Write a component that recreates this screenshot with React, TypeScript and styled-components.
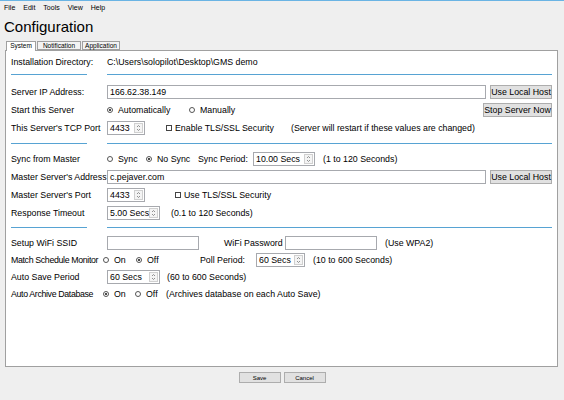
import React from 'react';
import styled, {createGlobalStyle} from 'styled-components';

const GlobalStyle = createGlobalStyle`
  html, body { margin: 0; padding: 0; }
  body {
    background: #efefef;
    font-family: "Liberation Sans", Arial, sans-serif;
    color: #000;
  }
`;

const Window = styled.div`
  width: 564px;
  height: 400px;
  box-sizing: border-box;
  border-top: 1px solid #6ab4e4;
  background: #efefef;
  display: flex;
  flex-direction: column;
  overflow: hidden;
`;

const MenuBar = styled.div`
  display: flex;
  gap: 8px;
  height: 12px;
  padding-left: 4px;
  align-items: center;
  font-size: 7px;
`;

const Title = styled.h1`
  margin: 0;
  padding: 5px 0 5px 4px;
  font-size: 15px;
  font-weight: normal;
  line-height: 18px;
`;

const TabStrip = styled.div`
  display: flex;
  align-items: flex-end;
  gap: 1px;
  padding-left: 6px;
  height: 9px;
  position: relative;
  z-index: 1;
`;

const Tab = styled.div<{$active?: boolean; $w: number}>`
  box-sizing: border-box;
  width: ${p => p.$w}px;
  height: ${p => (p.$active ? 10 : 9)}px;
  margin-bottom: ${p => (p.$active ? -1 : 0)}px;
  border: 1px solid #a0a0a0;
  border-bottom: ${p => (p.$active ? 'none' : '1px solid #a0a0a0')};
  background: ${p => (p.$active ? '#fff' : '#f3f3f3')};
  font-size: 6.5px;
  line-height: 8px;
  text-align: center;
`;

const Panel = styled.div`
  margin: 0 6px 0 5px;
  height: 317px;
  box-sizing: border-box;
  background: #fff;
  border: 1px solid #a0a0a0;
  padding: 2px 5px 0 5px;
  font-size: 8.8px;
`;

const Row = styled.div<{$h?: number}>`
  display: grid;
  grid-template-columns: 96px 1fr;
  align-items: center;
  height: ${p => p.$h ?? 18}px;
`;

const Label = styled.span<{$tight?: boolean}>`
  white-space: nowrap;
  letter-spacing: ${p => (p.$tight ? '-0.35px' : 'normal')};
`;

const Cell = styled.div`
  display: flex;
  align-items: center;
  min-width: 0;
  white-space: nowrap;
`;

const Separator = styled.div<{$mt: number; $mb: number}>`
  display: grid;
  grid-template-columns: 96px 1fr;
  margin: ${p => p.$mt}px 0 ${p => p.$mb}px;
  height: 1px;
  div {
    height: 1px;
    background: #57a3d3;
  }
  div:first-child {
    width: 76px;
  }
`;

const Text = styled.span<{$ml?: number; $w?: number}>`
  margin-left: ${p => p.$ml ?? 0}px;
  ${p => (p.$w ? `width: ${p.$w}px; flex: none;` : '')}
`;

const TextInput = styled.div<{$w?: number; $ml?: number}>`
  box-sizing: border-box;
  height: 14px;
  ${p => (p.$w ? `width: ${p.$w}px; flex: none;` : 'flex: 1;')}
  margin-left: ${p => p.$ml ?? 0}px;
  border: 1px solid #a7a9ae;
  background: #fff;
  padding-left: 2px;
  line-height: 12px;
`;

const Button = styled.button<{$w: number; $ml?: number}>`
  box-sizing: border-box;
  width: ${p => p.$w}px;
  height: 14px;
  margin-left: ${p => (p.$ml === undefined ? 'auto' : `${p.$ml}px`)};
  padding: 0;
  flex: none;
  font-family: inherit;
  font-size: 8.8px;
  color: #000;
  background: #e1e1e1;
  border: 1px solid #adadad;
`;

const SpinBox = styled.div<{$w: number; $ml?: number}>`
  box-sizing: border-box;
  width: ${p => p.$w}px;
  height: 14px;
  flex: none;
  margin-left: ${p => p.$ml ?? 0}px;
  border: 1px solid #a7a9ae;
  background: #fff;
  display: flex;
  align-items: center;
  padding: 0 1px 0 2px;
`;

const SpinButtons = styled.div`
  margin-left: auto;
  box-sizing: border-box;
  width: 9px;
  height: 10px;
  border: 1px solid #d0d0d0;
  background: #f4f4f4;
  display: flex;
  align-items: center;
  justify-content: center;
`;

const Option = styled.label<{$w?: number; $ml?: number}>`
  display: inline-flex;
  align-items: center;
  gap: 5px;
  flex: none;
  margin-left: ${p => p.$ml ?? 0}px;
  ${p => (p.$w ? `width: ${p.$w}px;` : '')}
`;

const RadioMark = styled.span<{$on?: boolean}>`
  box-sizing: border-box;
  width: 6px;
  height: 6px;
  border-radius: 50%;
  border: 1px solid #555;
  display: flex;
  align-items: center;
  justify-content: center;
  &::after {
    content: '';
    width: 2px;
    height: 2px;
    border-radius: 50%;
    background: ${p => (p.$on ? '#111' : 'transparent')};
  }
`;

const CheckMark = styled.span`
  box-sizing: border-box;
  width: 6px;
  height: 6px;
  border: 1px solid #444;
  margin-right: -2px;
`;

const Footer = styled.div`
  flex: 1;
  display: flex;
  justify-content: center;
  gap: 3px;
  padding-top: 5px;
`;

const FooterButton = styled.button`
  box-sizing: border-box;
  width: 42px;
  height: 11px;
  padding: 0;
  font-family: inherit;
  font-size: 6px;
  color: #000;
  background: #e1e1e1;
  border: 1px solid #adadad;
`;

const Spinner = ({value, w, ml}: {value: string; w: number; ml?: number}) => (
  <SpinBox $w={w} $ml={ml}>
    <span>{value}</span>
    <SpinButtons>
      <svg width="5" height="8" viewBox="0 0 5 8">
        <polyline points="1,3 2.5,1.5 4,3" fill="none" stroke="#777" strokeWidth="0.8" />
        <polyline points="1,5 2.5,6.5 4,5" fill="none" stroke="#777" strokeWidth="0.8" />
      </svg>
    </SpinButtons>
  </SpinBox>
);

const Radio = ({on, text, w, ml}: {on?: boolean; text: string; w?: number; ml?: number}) => (
  <Option $w={w} $ml={ml}>
    <RadioMark $on={on} />
    {text}
  </Option>
);

const Check = ({text, ml, w}: {text: string; ml?: number; w?: number}) => (
  <Option $ml={ml} $w={w}>
    <CheckMark />
    {text}
  </Option>
);

const App = () => {
  return (
    <>
      <GlobalStyle />
      <Window>
        <MenuBar>
          <span>File</span>
          <span>Edit</span>
          <span>Tools</span>
          <span>View</span>
          <span>Help</span>
        </MenuBar>
        <Title>Configuration</Title>
        <TabStrip>
          <Tab $active $w={30}>System</Tab>
          <Tab $w={44}>Notification</Tab>
          <Tab $w={38}>Application</Tab>
        </TabStrip>
        <Panel>
          <Row>
            <Label>Installation Directory:</Label>
            <Cell>C:\Users\solopilot\Desktop\GMS demo</Cell>
          </Row>
          <Separator $mt={3} $mb={8}>
            <div />
            <div />
          </Separator>

          <Row>
            <Label>Server IP Address:</Label>
            <Cell>
              <TextInput>166.62.38.149</TextInput>
              <Button $w={62} $ml={4}>Use Local Host</Button>
            </Cell>
          </Row>
          <Row>
            <Label>Start this Server</Label>
            <Cell>
              <Radio on text="Automatically" w={82} />
              <Radio text="Manually" />
              <Button $w={69}>Stop Server Now</Button>
            </Cell>
          </Row>
          <Row>
            <Label>This Server's TCP Port</Label>
            <Cell>
              <Spinner value="4433" w={38} />
              <Check text="Enable TLS/SSL Security" ml={21} w={125} />
              <Text>(Server will restart if these values are changed)</Text>
            </Cell>
          </Row>
          <Separator $mt={6} $mb={6}>
            <div />
            <div />
          </Separator>

          <Row>
            <Label>Sync from Master</Label>
            <Cell>
              <Radio text="Sync" w={39} />
              <Radio on text="No Sync" w={52} />
              <Text $w={55}>Sync Period:</Text>
              <Spinner value="10.00 Secs" w={62} />
              <Text $ml={8}>(1 to 120 Seconds)</Text>
            </Cell>
          </Row>
          <Row>
            <Label>Master Server's Address</Label>
            <Cell>
              <TextInput>c.pejaver.com</TextInput>
              <Button $w={62} $ml={4}>Use Local Host</Button>
            </Cell>
          </Row>
          <Row>
            <Label>Master Server's Port</Label>
            <Cell>
              <Spinner value="4433" w={38} />
              <Check text="Use TLS/SSL Security" ml={30} />
            </Cell>
          </Row>
          <Row>
            <Label>Response Timeout</Label>
            <Cell>
              <Spinner value="5.00 Secs" w={53} />
              <Text $ml={11}>(0.1 to 120 Seconds)</Text>
            </Cell>
          </Row>
          <Separator $mt={5} $mb={6}>
            <div />
            <div />
          </Separator>

          <Row $h={17}>
            <Label>Setup WiFi SSID</Label>
            <Cell>
              <TextInput $w={92} />
              <Text $ml={25} $w={61}>WiFi Password</Text>
              <TextInput $w={92} />
              <Text $ml={8}>(Use WPA2)</Text>
            </Cell>
          </Row>
          <Row $h={17}>
            <Label $tight>Match Schedule Monitor</Label>
            <Cell>
              <Radio text="On" w={33} ml={-4} />
              <Radio on text="Off" w={64} />
              <Text $w={56}>Poll Period:</Text>
              <Spinner value="60 Secs" w={49} />
              <Text $ml={8}>(10 to 600 Seconds)</Text>
            </Cell>
          </Row>
          <Row $h={17}>
            <Label>Auto Save Period</Label>
            <Cell>
              <Spinner value="60 Secs" w={53} />
              <Text $ml={7}>(60 to 600 Seconds)</Text>
            </Cell>
          </Row>
          <Row $h={17}>
            <Label $tight>Auto Archive Database</Label>
            <Cell>
              <Radio on text="On" w={32} ml={-4} />
              <Radio text="Off" w={31} />
              <Text>(Archives database on each Auto Save)</Text>
            </Cell>
          </Row>
        </Panel>
        <Footer>
          <FooterButton>Save</FooterButton>
          <FooterButton>Cancel</FooterButton>
        </Footer>
      </Window>
    </>
  );
};

export default App;
